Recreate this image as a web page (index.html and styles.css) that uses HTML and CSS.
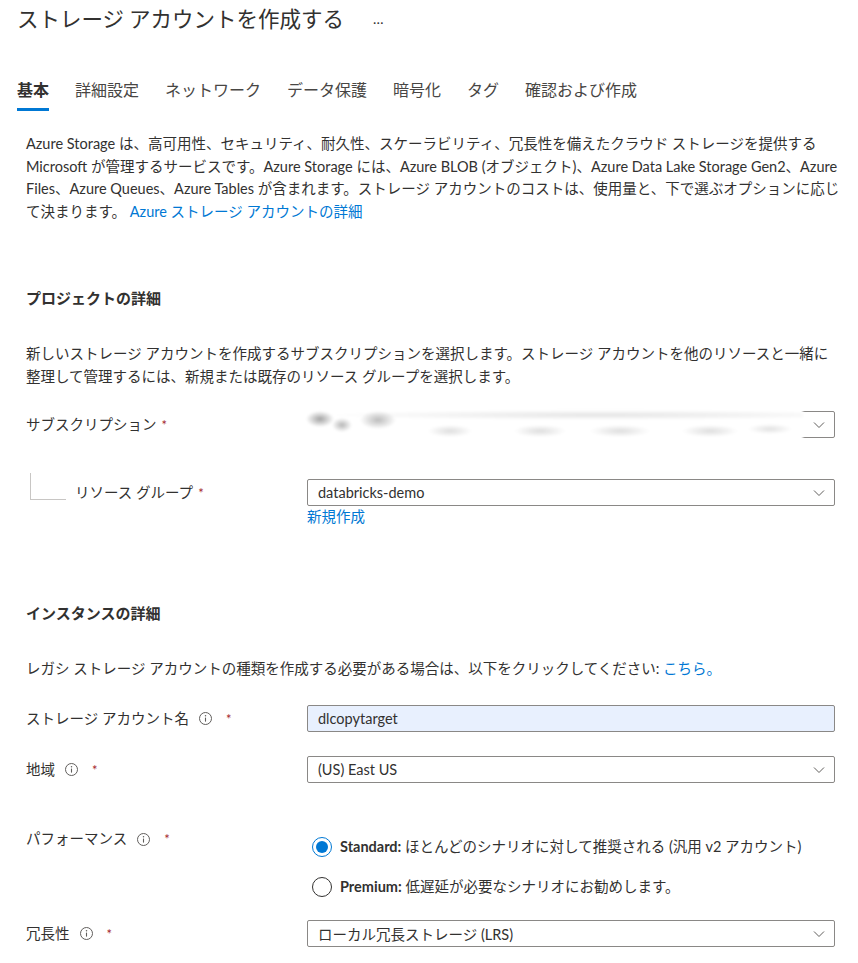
FILE: index.html
```html
<!DOCTYPE html>
<html lang="ja">
<head>
    <meta charset="UTF-8">
    <title>ストレージ アカウントを作成する</title>
    <link rel="stylesheet" href="styles.css">
</head>
<body>
    <div class="title-bar">
        <h1>ストレージ アカウントを作成する</h1>
        <span class="more">…</span>
    </div>

    <nav class="tabs">
        <a class="tab active">基本</a>
        <a class="tab">詳細設定</a>
        <a class="tab">ネットワーク</a>
        <a class="tab">データ保護</a>
        <a class="tab">暗号化</a>
        <a class="tab">タグ</a>
        <a class="tab">確認および作成</a>
    </nav>

    <div class="content">
        <p class="intro">Azure Storage は、高可用性、セキュリティ、耐久性、スケーラビリティ、冗長性を備えたクラウド ストレージを提供する Microsoft が管理するサービスです。Azure Storage には、Azure BLOB (オブジェクト)、Azure Data Lake Storage Gen2、Azure Files、Azure Queues、Azure Tables が含まれます。ストレージ アカウントのコストは、使用量と、下で選ぶオプションに応じて決まります。 <a class="link">Azure ストレージ アカウントの詳細</a></p>

        <!-- Project details -->
        <h2 class="section-title first">プロジェクトの詳細</h2>
        <p class="section-desc">新しいストレージ アカウントを作成するサブスクリプションを選択します。ストレージ アカウントを他のリソースと一緒に整理して管理するには、新規または既存のリソース グループを選択します。</p>

        <div class="form-row row-sub">
            <div class="label">サブスクリプション<span class="req tight">*</span></div>
            <div class="field">
                <div class="select">
                    <span></span>
                    <svg class="chevron" width="12" height="12" viewBox="0 0 12 12"><path d="M1 3.5 L6 8.5 L11 3.5" fill="none" stroke="#605e5c" stroke-width="1"/></svg>
                </div>
                <div class="masked"></div>
            </div>
        </div>

        <div class="form-row row-rg">
            <div class="label nested">リソース グループ<span class="req tight">*</span></div>
            <div class="field">
                <div class="select">
                    <span>databricks-demo</span>
                    <svg class="chevron" width="12" height="12" viewBox="0 0 12 12"><path d="M1 3.5 L6 8.5 L11 3.5" fill="none" stroke="#605e5c" stroke-width="1"/></svg>
                </div>
            </div>
        </div>
        <div class="form-row">
            <div></div>
            <a class="link new-link">新規作成</a>
        </div>

        <!-- Instance details -->
        <h2 class="section-title second">インスタンスの詳細</h2>
        <p class="section-desc">レガシ ストレージ アカウントの種類を作成する必要がある場合は、以下をクリックしてください: <a class="link">こちら。</a></p>

        <div class="form-row row-name">
            <div class="label">ストレージ アカウント名
                <svg class="info" width="13" height="13" viewBox="0 0 13 13"><circle cx="6.5" cy="6.5" r="6" fill="none" stroke="#605e5c" stroke-width="1"/><path d="M6.5 5.6 V9.6" stroke="#605e5c" stroke-width="1.1"/><circle cx="6.5" cy="3.8" r="0.75" fill="#605e5c"/></svg>
                <span class="req">*</span>
            </div>
            <div class="field">
                <div class="text-input">dlcopytarget</div>
            </div>
        </div>

        <div class="form-row row-region">
            <div class="label">地域
                <svg class="info" width="13" height="13" viewBox="0 0 13 13"><circle cx="6.5" cy="6.5" r="6" fill="none" stroke="#605e5c" stroke-width="1"/><path d="M6.5 5.6 V9.6" stroke="#605e5c" stroke-width="1.1"/><circle cx="6.5" cy="3.8" r="0.75" fill="#605e5c"/></svg>
                <span class="req">*</span>
            </div>
            <div class="field">
                <div class="select">
                    <span>(US) East US</span>
                    <svg class="chevron" width="12" height="12" viewBox="0 0 12 12"><path d="M1 3.5 L6 8.5 L11 3.5" fill="none" stroke="#605e5c" stroke-width="1"/></svg>
                </div>
            </div>
        </div>

        <div class="form-row row-perf">
            <div class="label">パフォーマンス
                <svg class="info" width="13" height="13" viewBox="0 0 13 13"><circle cx="6.5" cy="6.5" r="6" fill="none" stroke="#605e5c" stroke-width="1"/><path d="M6.5 5.6 V9.6" stroke="#605e5c" stroke-width="1.1"/><circle cx="6.5" cy="3.8" r="0.75" fill="#605e5c"/></svg>
                <span class="req">*</span>
            </div>
            <div class="radios">
                <div class="radio-option">
                    <span class="radio checked"></span>
                    <span><b>Standard:</b> ほとんどのシナリオに対して推奨される (汎用 v2 アカウント)</span>
                </div>
                <div class="radio-option">
                    <span class="radio"></span>
                    <span><b>Premium:</b> 低遅延が必要なシナリオにお勧めします。</span>
                </div>
            </div>
        </div>

        <div class="form-row row-redundancy">
            <div class="label">冗長性
                <svg class="info" width="13" height="13" viewBox="0 0 13 13"><circle cx="6.5" cy="6.5" r="6" fill="none" stroke="#605e5c" stroke-width="1"/><path d="M6.5 5.6 V9.6" stroke="#605e5c" stroke-width="1.1"/><circle cx="6.5" cy="3.8" r="0.75" fill="#605e5c"/></svg>
                <span class="req">*</span>
            </div>
            <div class="field">
                <div class="select">
                    <span>ローカル冗長ストレージ (LRS)</span>
                    <svg class="chevron" width="12" height="12" viewBox="0 0 12 12"><path d="M1 3.5 L6 8.5 L11 3.5" fill="none" stroke="#605e5c" stroke-width="1"/></svg>
                </div>
            </div>
        </div>
    </div>
</body>
</html>
```

FILE: styles.css
```css
body {
    margin: 0;
    font-family: "Segoe UI", Lato, "Noto Sans CJK JP", sans-serif;
    color: #323130;
    background-color: #fff;
    overflow: hidden;
}
.title-bar {
    display: flex;
    align-items: center;
    padding-left: 17px;
    height: 36px;
}
.title-bar h1 {
    margin: 0;
    font-size: 21.5px;
    font-weight: 400;
    line-height: 36px;
    font-family: "Noto Sans CJK JP", sans-serif;
}
.more {
    margin-left: 29px;
    font-size: 14px;
    color: #323130;
}
.tabs {
    display: flex;
    gap: 26px;
    margin-top: 43px;
    padding-left: 17px;
}
.tab {
    font-size: 16px;
    line-height: 22px;
    padding-bottom: 7px;
    border-bottom: 3px solid transparent;
    color: #484644;
    cursor: pointer;
}
.tab.active {
    font-weight: 700;
    color: #323130;
    border-bottom-color: #0078d4;
}
.content {
    padding: 0 10px 0 26px;
    font-size: 14.5px;
}
.intro {
    margin: 22px 0 0;
    line-height: 22.5px;
}
.link {
    color: #0078d4;
    cursor: pointer;
}
.section-title {
    margin: 0;
    font-size: 15px;
    font-weight: 700;
    line-height: 22px;
}
.section-title.first {
    margin-top: 64px;
}
.section-title.second {
    margin-top: 74px;
}
.section-desc {
    margin: 34px 0 0;
    max-width: 812px;
    line-height: 22.5px;
}
.form-row {
    display: grid;
    grid-template-columns: 281px 528px;
    align-items: center;
}
.label {
    display: flex;
    align-items: center;
    line-height: 22px;
    position: relative;
}
.label.nested {
    padding-left: 49px;
}
/* tree connector for the resource group */
.label.nested::before {
    content: "";
    position: absolute;
    left: 4px;
    top: -9px;
    width: 35px;
    height: 26px;
    border-left: 1px solid #c8c6c4;
    border-bottom: 1px solid #c8c6c4;
}
.req {
    color: #a4262c;
    font-size: 13px;
    margin-left: 14px;
}
.req.tight {
    margin-left: 5px;
}
.info {
    margin-left: 10px;
}
.field {
    position: relative;
}
.select,
.text-input {
    display: flex;
    align-items: center;
    justify-content: space-between;
    height: 27px;
    box-sizing: border-box;
    padding: 0 9px 0 10px;
    border: 1px solid #8a8886;
    border-radius: 2px;
    background-color: #fff;
}
.text-input {
    background-color: #e8f0fe;
}
/* blurred-out subscription value */
.masked {
    position: absolute;
    left: -7px;
    right: 32px;
    top: -4px;
    bottom: -4px;
    background-color: #fff;
    background-image:
        radial-gradient(ellipse 14px 8px at 20px 12px, rgba(100,100,100,0.6), transparent),
        radial-gradient(ellipse 10px 7px at 42px 18px, rgba(110,110,110,0.5), transparent),
        radial-gradient(ellipse 18px 9px at 78px 13px, rgba(120,120,120,0.5), transparent),
        radial-gradient(ellipse 22px 6px at 150px 24px, rgba(160,160,160,0.35), transparent),
        radial-gradient(ellipse 26px 6px at 240px 24px, rgba(160,160,160,0.35), transparent),
        radial-gradient(ellipse 30px 6px at 320px 24px, rgba(160,160,160,0.35), transparent),
        radial-gradient(ellipse 28px 6px at 410px 24px, rgba(160,160,160,0.35), transparent),
        radial-gradient(ellipse 22px 5px at 470px 22px, rgba(170,170,170,0.35), transparent),
        radial-gradient(ellipse 270px 5px at 300px 8px, rgba(190,190,190,0.4), transparent);
    filter: blur(1px);
}
.new-link {
    line-height: 22px;
}
.row-sub {
    margin-top: 23px;
}
.row-rg {
    margin-top: 41px;
}
.row-name {
    margin-top: 24.5px;
}
.row-region {
    margin-top: 24px;
}
.row-perf {
    margin-top: 45px;
    align-items: start;
}
.radios {
    display: flex;
    flex-direction: column;
    gap: 18px;
    padding-top: 8px;
    padding-left: 5px;
}
.radio-option {
    display: flex;
    align-items: center;
    gap: 8px;
    line-height: 22px;
}
.radio-option b {
    font-weight: 700;
}
.radio {
    width: 20px;
    height: 20px;
    box-sizing: border-box;
    border: 1px solid #323130;
    border-radius: 50%;
    display: flex;
    align-items: center;
    justify-content: center;
}
.radio.checked {
    border-color: #0078d4;
}
.radio.checked::after {
    content: "";
    width: 12px;
    height: 12px;
    border-radius: 50%;
    background-color: #0078d4;
}
.row-redundancy {
    margin-top: 22px;
}
```
